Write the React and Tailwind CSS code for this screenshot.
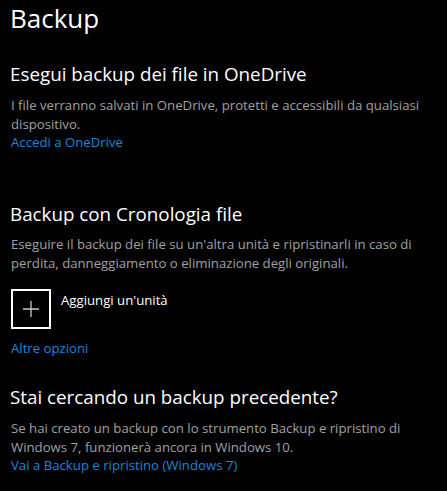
export default function App() {
  const font = { fontFamily: '"Open Sans", "Noto Sans", sans-serif' };
  return (
    <div className="w-[447px] h-[491px] bg-black text-white overflow-hidden pl-[10px] pr-[8px]" style={font}>
      <h1 className="text-[26px] leading-[36px] font-normal pt-0">Backup</h1>

      <h2 className="mt-[24px] text-[18.8px] leading-[28px] font-normal">Esegui backup dei file in OneDrive</h2>
      <p className="mt-[8px] text-[13.2px] leading-[19px] text-[#a0a0a0] pl-px">
        I file verranno salvati in OneDrive, protetti e accessibili da qualsiasi dispositivo.
      </p>
      <a className="block -mt-px text-[13.2px] leading-[19px] text-[#1a86d9] pl-px">Accedi a OneDrive</a>

      <h2 className="mt-[48px] text-[18.8px] leading-[28px] font-normal">Backup con Cronologia file</h2>
      <p className="mt-[7px] text-[13.2px] leading-[19px] text-[#a0a0a0] pl-px">
        Eseguire il backup dei file su un'altra unità e ripristinarli in caso di perdita, danneggiamento o eliminazione degli originali.
      </p>
      <div className="mt-[16px] flex items-start gap-[10px] pl-px">
        <div className="w-[40px] h-[40px] border-2 border-white flex items-center justify-center">
          <svg width="18" height="18" viewBox="0 0 18 18">
            <path d="M9 1v16M1 9h16" stroke="#c8c8c8" strokeWidth="1.3" />
          </svg>
        </div>
        <span className="text-[13.2px] leading-[19px] text-white mt-[2px]">Aggiungi un'unità</span>
      </div>
      <a className="block mt-[10px] text-[13.2px] leading-[19px] text-[#1a86d9] pl-px">Altre opzioni</a>

      <h2 className="mt-[25px] text-[18.8px] leading-[28px] font-normal">Stai cercando un backup precedente?</h2>
      <p className="mt-[8px] text-[13.2px] leading-[19px] text-[#a0a0a0] pl-px">
        Se hai creato un backup con lo strumento Backup e ripristino di Windows 7, funzionerà ancora in Windows 10.
      </p>
      <a className="block -mt-px text-[13.2px] leading-[19px] text-[#1a86d9] pl-px">Vai a Backup e ripristino (Windows 7)</a>
    </div>
  );
}
